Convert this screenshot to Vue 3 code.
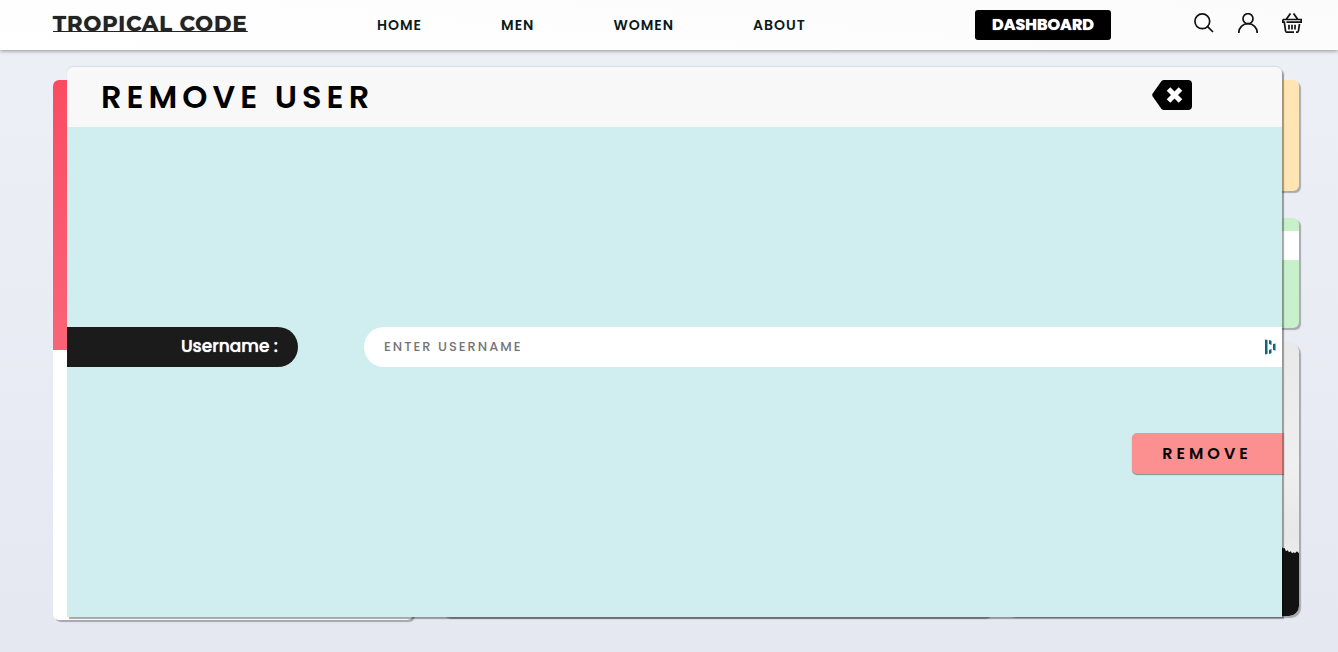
<script setup>
import { ref } from 'vue'

const links = ['HOME', 'MEN', 'WOMEN', 'ABOUT']
const username = ref('')
</script>

<template>
  <div class="page">
    <header class="topbar">
      <a class="brand" href="#">TROPICAL CODE</a>
      <nav class="nav">
        <a v-for="link in links" :key="link" href="#">{{ link }}</a>
      </nav>
      <button class="dashboard" type="button">DASHBOARD</button>
      <div class="tools">
        <a href="#" aria-label="Search">
          <svg viewBox="0 0 20 20"><circle cx="8.3" cy="8.3" r="7.4" /><path d="M13.6 13.6 19 19" /></svg>
        </a>
        <a href="#" aria-label="Account">
          <svg viewBox="0 0 20 20"><circle cx="10" cy="5.7" r="5" /><path d="M.8 20c0-5.500 3.900-9.300 9.200-9.300s9.200 3.800 9.200 9.300" /></svg>
        </a>
        <a href="#" aria-label="Basket">
          <svg viewBox="0 0 20 20"><path d="M4.300 6.300 8.500.4M15.700 6.300 11.500.4M.8 6.500h18.400v2.700H4.500M.8 6.500v2.700h1.500l1.300 9q.2 1 1.200 1H12M14 19.200h1.200q1 0 1.200-1l1.100-7.200M7 11.700v4.800M10 11.700v4.800M13 11.700v4.800" /></svg>
        </a>
      </div>
    </header>

    <main class="stage">
      <section class="card profile"><div class="cover"></div></section>
      <section class="card center"></section>
      <div class="stack">
        <section class="card yellow"></section>
        <section class="card green"><div class="stripe"></div></section>
        <section class="card photo">
          <svg class="ground" viewBox="0 0 292 70" preserveAspectRatio="xMaxYMax slice">
            <path d="M0 0H274L276 3 278 3 279 6 281 5 282 7 284 6 285 8 287 7 288 8 290 6 292 8V70H0Z" />
          </svg>
        </section>
      </div>

      <section class="modal" role="dialog" aria-labelledby="modal-title">
        <div class="modal-head">
          <h1 id="modal-title">REMOVE USER</h1>
          <button class="close" type="button" aria-label="Close">
            <svg viewBox="0 0 40 30">
              <path d="M12 0H36Q40 0 40 4V26Q40 30 36 30H12Q10.500 30 9.500 29L.7 16.500Q-.3 15 .7 13.500L9.500 1Q10.500 0 12 0Z" />
              <path class="cross" d="M16.500 9 28.500 21M28.500 9 16.500 21" />
            </svg>
          </button>
        </div>
        <form class="form" @submit.prevent>
          <div class="field">
            <label for="username">Username :</label>
            <div class="box">
              <input id="username" v-model="username" type="text" placeholder="ENTER USERNAME" />
              <svg class="vault" viewBox="0 0 12 16">
                <path d="M1 .5 3.500 1V15L1 15.500ZM5 1 7.500 1.700V6L5 5ZM5 11 7.500 10V14.300L5 15ZM9 5 11.500 4.500V11.500L9 11Z" />
              </svg>
            </div>
          </div>
          <button class="remove" type="submit">REMOVE</button>
        </form>
      </section>
    </main>
  </div>
</template>

<style>
body {
  margin: 0;
}
</style>

<style scoped>
.page {
  min-height: 100vh;
  display: flex;
  flex-direction: column;
  background: linear-gradient(#edf0f5, #e5e8f1);
  font-family: Poppins, Inter, "Open Sans", sans-serif;
}
.page * {
  box-sizing: border-box;
}
button {
  border: 0;
  padding: 0;
  font-family: inherit;
  cursor: pointer;
}
.topbar {
  position: relative;
  display: flex;
  align-items: center;
  height: 50px;
  padding: 0 36px 0 53px;
  background: linear-gradient(5deg, #ffffff, #fbfbfb);
  box-shadow: 0 1px 4px rgba(0, 0, 0, 0.4);
}
.brand {
  width: 324px;
  padding-bottom: 2px;
  color: #242424;
  font: 700 21px/28px Montserrat, Lato, sans-serif;
  letter-spacing: 1px;
  text-underline-offset: 0;
  text-decoration-thickness: 1px;
  text-decoration-skip-ink: none;
  text-shadow: 0 0 1px #242424;
}
.nav {
  display: flex;
  gap: 79px;
}
.nav a {
  color: #0a1a20;
  font-size: 14px;
  line-height: 20px;
  font-weight: 600;
  letter-spacing: 1px;
  text-decoration: none;
}
.dashboard {
  width: 136px;
  height: 30px;
  margin-left: auto;
  padding-bottom: 2px;
  border-radius: 3px;
  background: #000000;
  color: #ffffff;
  font-size: 16px;
  font-weight: 700;
  text-shadow: 0 0 1px #ffffff;
}
.tools {
  display: flex;
  gap: 24px;
  margin-left: 83px;
  padding-bottom: 4px;
}
.tools svg {
  display: block;
  width: 20px;
  height: 20px;
  fill: none;
  stroke: #111111;
  stroke-width: 1.7;
}
.stage {
  position: relative;
  flex: 1;
  display: grid;
  grid-template-columns: 360fr 547fr 279fr;
  column-gap: 30px;
  align-items: start;
  padding: 30px 39px 32px 53px;
}
.stage > .stack {
  margin-left: -16px;
}
.card {
  border-radius: 6px;
  box-shadow: 2px 2px 1px rgba(0, 0, 0, 0.28);
}
.profile {
  height: 540px;
  background: #ffffff;
}
.cover {
  height: 270px;
  border-radius: 6px 0 0 0;
  background: linear-gradient(#fa4c61, #fa6478);
}
.center {
  height: 537px;
  background: #333333;
}
.yellow {
  height: 111px;
  background: #ffe5b4;
}
.green {
  height: 110px;
  margin-top: 27px;
  padding-top: 13px;
  background: #c8f0cb;
}
.stripe {
  height: 29px;
  background: #ffffff;
}
.photo {
  display: flex;
  align-items: flex-end;
  height: 274px;
  margin-top: 14px;
  border-radius: 10px;
  overflow: hidden;
  background: linear-gradient(#e9e9e9, #efefef 45%, #e8e8e8 70%, #f5f5f5);
}
.ground {
  width: 100%;
  height: 70px;
  fill: #121212;
}
.modal {
  position: absolute;
  inset: 17px 56px 35px 67px;
  display: flex;
  flex-direction: column;
  border-radius: 6px 6px 0 0;
  background: #d0eef0;
  box-shadow: 2px 2px 1px rgba(0, 0, 0, 0.35), 0 -1px 1px rgba(120, 150, 180, 0.2);
}
.modal-head {
  display: flex;
  align-items: center;
  justify-content: space-between;
  height: 60px;
  padding: 0 90px 0 34px;
  border-radius: 6px 6px 0 0;
  background: #f8f8f8;
}
h1 {
  margin: 0;
  color: #000000;
  font-size: 32px;
  line-height: 40px;
  font-weight: 600;
  letter-spacing: 5px;
}
.close {
  margin-bottom: 4px;
  background: none;
}
.close svg {
  display: block;
  width: 40px;
  height: 30px;
}
.cross {
  stroke: #ffffff;
  stroke-width: 5;
}
.form {
  display: flex;
  flex-direction: column;
  gap: 66px;
  padding-top: 200px;
}
.field {
  display: flex;
  gap: 66px;
}
.field label {
  width: 231px;
  padding-right: 20px;
  border-radius: 0 20px 20px 0;
  background: #1b1b1b;
  color: #ffffff;
  font-size: 17px;
  line-height: 38px;
  font-weight: 500;
  text-align: right;
  text-shadow: 0 0 1px #ffffff;
}
.box {
  flex: 1;
  display: flex;
  align-items: center;
  height: 40px;
  padding: 0 6px 0 20px;
  border-radius: 20px 0 0 20px;
  background: #ffffff;
}
.box input {
  flex: 1;
  min-width: 0;
  height: 38px;
  border: 0;
  padding: 0;
  outline: 0;
  background: none;
  font-family: inherit;
  font-size: 13px;
  font-weight: 500;
  letter-spacing: 2px;
}
.box input::placeholder {
  color: #757575;
}
.vault {
  width: 12px;
  height: 16px;
  fill: #0e6478;
}
.remove {
  align-self: flex-end;
  width: 152px;
  height: 41px;
  margin-right: -2px;
  border-right: 2px solid #b36a6a;
  border-radius: 5px 0 0 5px;
  background: #fc9090;
  box-shadow: 0 1px 1px rgba(0, 0, 0, 0.4);
  color: #000000;
  font-size: 16px;
  font-weight: 600;
  letter-spacing: 4px;
}
</style>
